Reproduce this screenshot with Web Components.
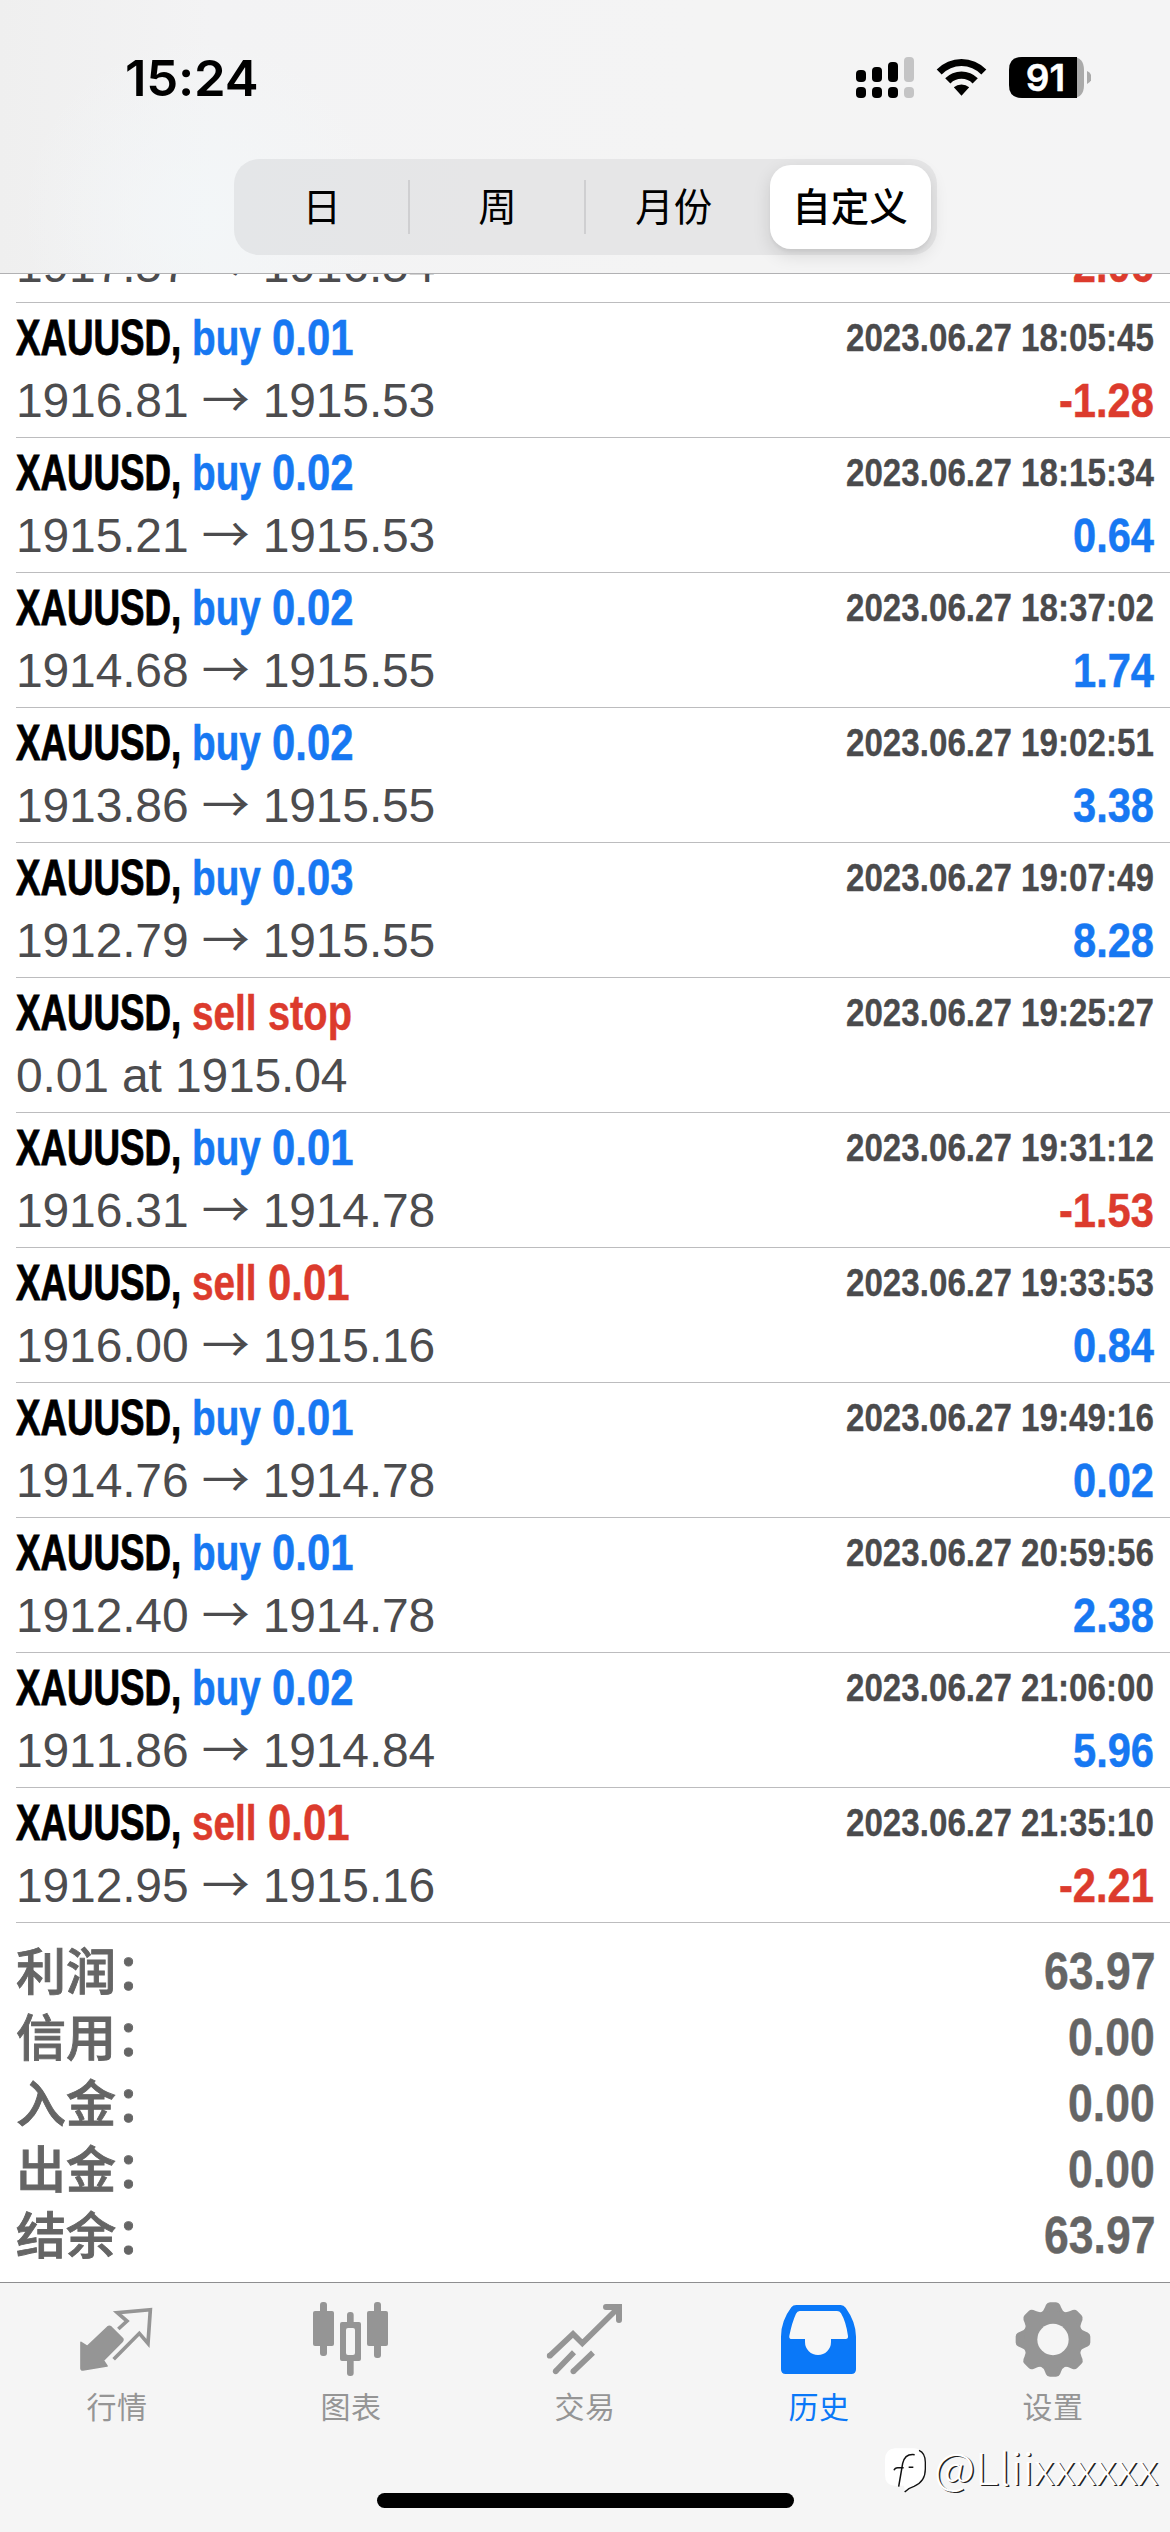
<!DOCTYPE html>
<html lang="zh-CN">
<head>
<meta charset="utf-8">
<title>历史</title>
<style>
html,body{margin:0;padding:0}
body{width:1170px;height:2532px;overflow:hidden;background:#fff;font-family:"Liberation Sans","Noto Sans CJK SC",sans-serif}
</style>
</head>
<body>
<history-screen></history-screen>
<script>
const define = (name, html, setup) => customElements.define(name, class extends HTMLElement {
  connectedCallback() {
    if (this.shadowRoot) return;
    const root = this.attachShadow({mode: 'open'});
    const t = document.createElement('template');
    t.innerHTML = typeof html === 'function' ? html(this) : html;
    root.append(t.content.cloneNode(true));
    if (setup) setup(this, root);
  }
});

// Text whose glyphs are condensed horizontally by factor k; the host keeps the condensed width.
define('narrow-text', `<style>
:host{display:block;white-space:pre;flex:none}
span{display:inline-block;transform-origin:0 50%;white-space:pre}
</style><span><slot></slot></span>`, (host, root) => {
  const s = root.querySelector('span');
  const k = +host.getAttribute('k');
  host.style.width = s.getBoundingClientRect().width * k + 'px';
  s.style.transform = `scaleX(${k})`;
});

define('status-bar', `<style>
:host{display:flex;height:159px;box-sizing:border-box;padding:0 79px 0 125px;justify-content:space-between}
.time{font:600 50px/60px Inter,sans-serif;margin-top:48px;letter-spacing:-.2px;color:#000}
svg{display:block;margin-top:50px}
</style>
<narrow-text class="time" k="1.017">15:24</narrow-text>
<svg width="240" height="56" viewBox="851 50 240 56">
<g fill="#000"><rect x="856" y="70" width="10" height="12" rx="4"/><rect x="872" y="67" width="10" height="15" rx="4"/><rect x="888" y="62" width="10" height="20" rx="4"/>
<rect x="856" y="87" width="10" height="11" rx="4"/><rect x="872" y="87" width="10" height="11" rx="4"/><rect x="888" y="87" width="10" height="11" rx="4"/></g>
<g fill="#c4c4c5"><rect x="904" y="57" width="10" height="25" rx="4"/><rect x="904" y="87" width="10" height="11" rx="4"/></g>
<path d="M936.7 69.5a34.5 34.5 0 0 1 49.6 0l-5 5a27.500 27.500 0 0 0-39.600 0zM945.200 78.300a23 23 0 0 1 32.600 0l-5.200 5.200a15.600 15.600 0 0 0-22.200 0zM953.800 87.300a11.600 11.600 0 0 1 15.400 0l-7.700 8.500z" fill="#000"/>
<path d="M1022 57h50q12 0 12 13v15q0 13-12 13h-50q-13 0-13-13V70q0-13 13-13z" fill="#aaa"/>
<path d="M1022 57h55v41h-55q-13 0-13-13V70q0-13 13-13z" fill="#000"/>
<path d="M1087 71q4.500 2 4.500 6.500t-4.500 6.500z" fill="#aaa"/>
<text x="1045.500" y="91" font-family="Inter,sans-serif" font-weight="600" font-size="37" fill="#fff" stroke="#fff" stroke-width=".5" text-anchor="middle">91</text>
</svg>`);

define('range-option', `<style>
:host{flex:1 1 0;display:flex;align-items:center;justify-content:center;height:96px;box-sizing:border-box;font:400 38.500px/48px "Noto Sans CJK SC",sans-serif;color:#000}
:host([divided])::after{content:"";width:2px;height:54px;background:#cfcfd1;margin-right:-1px}
span{flex:1;text-align:center;padding:0 0 6px 2px}
:host([selected]) span{display:block;margin:0 6px 0 9px;padding:15px 0 21px;background:#fff;border-radius:21px;font-weight:500;box-shadow:0 6px 18px rgba(0,0,0,.12),0 3px 3px rgba(0,0,0,.04)}
</style><span><slot></slot></span>`);

define('range-picker', `<style>
:host{display:flex;width:703px;height:96px;margin:0 auto;border-radius:25px;background:linear-gradient(90deg,#e4e6e8,#e6e6e7 35%,#e6e6e7)}
</style><slot></slot>`);

define('nav-header', `<style>
:host{display:block;height:274px;box-sizing:border-box;border-bottom:1px solid #b1b1b3;flex:none;
background:radial-gradient(circle at 200px 215px,rgba(243,247,249,.8),transparent 180px),linear-gradient(90deg,#efefef,#f3f3f4 18%,#f4f4f4 60%,#f4f4f5)}
</style><slot></slot>`);

define('trade-row', el => {
  const a = n => el.getAttribute(n) || '';
  const side = a('side'), profit = a('profit');
  const title = side && `<div class="title"><narrow-text class="sym" k=".734">${a('symbol')},</narrow-text><narrow-text class="side ${side}" k=".775">${side}</narrow-text><narrow-text class="${side}" k=".${a('volume') === 'stop' ? '795' : '838'}">${a('volume')}</narrow-text><narrow-text class="date end" k=".85">${a('date')}</narrow-text></div>`;
  return `<style>
:host{display:flex;flex-direction:column;justify-content:flex-end;gap:9px;height:135px;flex:none;box-sizing:border-box;margin-left:16px;padding:0 16px 9px 0;border-bottom:1px solid #bcbcbe;font-kerning:none}
:host(:not([side])){height:73px}
div{display:flex;height:54px;line-height:54px}
.end{margin-left:auto}
.title{font-weight:700;font-size:50px}
.sym{color:#000;-webkit-text-stroke:.9px #000;margin-right:11px}
.buy{color:#1778f2;-webkit-text-stroke:.5px}.sell{color:#dc3b2d;-webkit-text-stroke:.5px}
.side{margin-right:11px}
.date{font-size:39px;color:#4a4a4c;-webkit-text-stroke:.3px}
.price{font-size:48px;color:#4c4c4e;letter-spacing:-.15px}
.price i{font:400 48px/0 "Noto Sans CJK SC",sans-serif}
.num{font-weight:700;font-size:48px;letter-spacing:0}
</style>${title}
<div class="price"><span>${a('from').replace('→', '<i>→</i>')}</span>${profit ? `<narrow-text class="num end ${profit[0] === '-' ? 'sell' : 'buy'}" k=".867">${profit}</narrow-text>` : ''}</div>`;
});

define('trade-list', `<style>
:host{display:flex;flex-direction:column;justify-content:flex-end;flex:1 1 0;min-height:0;overflow:hidden;background:#fff}
</style><slot></slot>`);

define('summary-line', el => `<style>
:host{display:flex;justify-content:space-between;height:66px;line-height:66px;padding:0 15px 0 16px;color:#656565}
span{font:500 50px/60px "Noto Sans CJK SC",sans-serif;-webkit-text-stroke:.9px}
narrow-text{font-weight:700;font-size:51px;line-height:68px;-webkit-text-stroke:.4px}
</style><span><slot></slot></span><narrow-text k=".873">${el.getAttribute('value')}</narrow-text>`);

define('account-summary', `<style>:host{display:block;flex:none;height:359px;box-sizing:border-box;padding-top:15px}</style><slot></slot>`);

define('tab-item', `<style>
:host{display:flex;flex:1 1 0;flex-direction:column;align-items:center;gap:7px;color:#959595;font:400 30px/36px "Noto Sans CJK SC",sans-serif;letter-spacing:.5px}
:host([active]){color:#0a78f8}
::slotted(svg){display:block;width:80px;height:80px}
</style><slot name="icon"></slot><span><slot></slot></span>`);

define('tab-bar', `<style>
:host{display:block;flex:none;height:250px;box-sizing:border-box;border-top:1px solid #8e8e90;background:#f5f5f5}
nav{display:flex;padding-top:17px;height:193px}
.home{width:417px;height:15px;border-radius:8px;background:#000;margin:0 auto}
</style><nav><slot></slot></nav><div class="home"></div>`);

define('author-mark', `<style>
:host{position:absolute;left:883px;top:2446px;display:flex;align-items:flex-start;gap:8px;height:52px}
svg{display:block}
.name{font:300 44px/52px "Noto Sans CJK SC",sans-serif;color:#fff;text-shadow:1.500px 1px 0 #222;margin-top:-6px}
</style>
<svg width="43" height="50" viewBox="366 534 129 150">
<path d="M402 541h58q34 5 34 42v20q0 37-34 52-15 4-28 16l-3-18h-27q-30 0-30-32v-46q0-32 30-34z" fill="#fff"/>
<path d="M474 547q19 8 19 36v20q0 38-34 52-17 5-28 17" fill="none" stroke="#111" stroke-width="4"/>
<path d="M461 560q-29-4-36 26l-12 70M399 607q3-8 11-8h18M443 598h14" fill="none" stroke="#111" stroke-width="4.500"/>
</svg>
<narrow-text class="name" k="1.025">@Lliixxxxxx</narrow-text>`);

const trades = [
 ['buy','0.01','1916.81 → 1915.53','2023.06.27 18:05:45','-1.28'],
 ['buy','0.02','1915.21 → 1915.53','2023.06.27 18:15:34','0.64'],
 ['buy','0.02','1914.68 → 1915.55','2023.06.27 18:37:02','1.74'],
 ['buy','0.02','1913.86 → 1915.55','2023.06.27 19:02:51','3.38'],
 ['buy','0.03','1912.79 → 1915.55','2023.06.27 19:07:49','8.28'],
 ['sell','stop','0.01 at 1915.04','2023.06.27 19:25:27',''],
 ['buy','0.01','1916.31 → 1914.78','2023.06.27 19:31:12','-1.53'],
 ['sell','0.01','1916.00 → 1915.16','2023.06.27 19:33:53','0.84'],
 ['buy','0.01','1914.76 → 1914.78','2023.06.27 19:49:16','0.02'],
 ['buy','0.01','1912.40 → 1914.78','2023.06.27 20:59:56','2.38'],
 ['buy','0.02','1911.86 → 1914.84','2023.06.27 21:06:00','5.96'],
 ['sell','0.01','1912.95 → 1915.16','2023.06.27 21:35:10','-2.21']
];

define('history-screen', `<style>
:host{display:flex;flex-direction:column;width:1170px;height:2532px;position:relative;overflow:hidden}
</style>
<nav-header><status-bar></status-bar><range-picker><range-option divided>日</range-option><range-option divided>周</range-option><range-option>月份</range-option><range-option selected>自定义</range-option></range-picker></nav-header>
<trade-list><trade-row from="1917.57 → 1916.54" profit="-2.06"></trade-row>${trades.map(t => `<trade-row symbol="XAUUSD" side="${t[0]}" volume="${t[1]}" from="${t[2]}" date="${t[3]}" profit="${t[4]}"></trade-row>`).join('')}
<account-summary><summary-line value="63.97">利润：</summary-line><summary-line value="0.00">信用：</summary-line><summary-line value="0.00">入金：</summary-line><summary-line value="0.00">出金：</summary-line><summary-line value="63.97">结余：</summary-line></account-summary></trade-list>
<tab-bar>
<tab-item><svg slot="icon" viewBox="231 90 240 240" fill="none" stroke="currentColor"><path d="M243 217L262 229 323 171Q328 167 333 171L367 205Q371 210 366 215L310 271 321 288 249 300Q242 300 243 293z" fill="currentColor" stroke-width="5" stroke-linejoin="round"/><path d="M355 177L381 153 352 128 451 119 444 220 418 190 341 268" stroke-width="11"/></svg>行情</tab-item>
<tab-item><svg slot="icon" viewBox="933 90 240 240" fill="currentColor"><rect x="939" y="123" width="63" height="105" rx="6"/><rect x="960" y="96" width="21" height="162" rx="9"/><rect x="1101" y="123" width="63" height="105" rx="6"/><rect x="1122" y="96" width="21" height="168" rx="9"/><rect x="1041" y="126" width="20" height="40" rx="9"/><rect x="1041" y="262" width="20" height="56" rx="9"/><path fill-rule="evenodd" d="M1026 156h51q6 0 6 6v105q0 6-6 6h-51q-6 0-6-6V162q0-6 6-6zM1044 174q-6 0-6 6v69q0 6 6 6h15q6 0 6-6v-69q0-6-6-6z"/></svg>图表</tab-item>
<tab-item><svg slot="icon" viewBox="435 90 240 240" fill="none" stroke="currentColor" stroke-width="17"><path d="M450 257L519 192 547 220 652 116"/><path d="M618 111h39v39" stroke-linecap="round" stroke-width="18"/><path d="M645 102h12q9 0 9 9v10z" fill="currentColor" stroke="none"/><path d="M467 304L522 247M520 304L579 248"/><g fill="currentColor" stroke="none"><circle cx="449" cy="257" r="8.500"/><circle cx="467" cy="304" r="8.500"/><circle cx="520" cy="304" r="8.500"/></g></svg>交易</tab-item>
<tab-item active><svg slot="icon" viewBox="57 90 240 240"><path fill="currentColor" d="M109 105H242Q251 105 257 113Q288 156 288 200V298Q288 312 274 312H77Q63 312 63 298V200Q63 153 94 112Q99 105 109 105z"/><path fill="#f7f7f7" d="M119 123H231Q239 123 243 130Q258 155 264 198Q265 207 257 207H213V216A39 39 0 0 1 135 216V207H96Q86 207 88 197Q96 157 108 131Q112 123 119 123z"/></svg>历史</tab-item>
<tab-item><svg slot="icon" viewBox="-120 -118.500 240 240" id="gear"></svg>设置</tab-item>
</tab-bar>
<author-mark></author-mark>`, (host, root) => {
  // Gear: eight rounded teeth around a ring with a centre hole.
  let teeth = '';
  for (let i = 0; i < 8; i++) teeth += `<path transform="rotate(${i * 45})" d="M-38 -80Q-28 -85 -24 -97L-21 -104Q-17 -112 -9 -112H9Q17 -112 21 -104L24 -97Q28 -85 38 -80V-40H-38z"/>`;
  const g = root.getElementById('gear');
  g.innerHTML = `<g fill="currentColor">${teeth}<path fill-rule="evenodd" d="M0-86A86 86 0 1 1 0 86A86 86 0 1 1 0-86zM0-47A47 47 0 1 0 0 47A47 47 0 1 0 0-47z"/></g><circle r="47" fill="#f5f5f5"/>`;
});
</script>
</body>
</html>
